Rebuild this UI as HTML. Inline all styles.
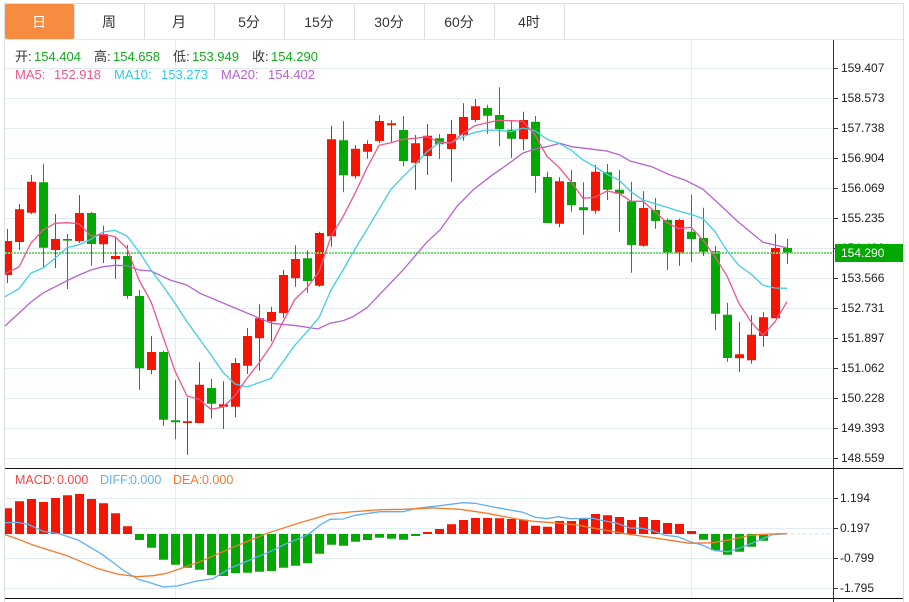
<!DOCTYPE html>
<html><head><meta charset="utf-8"><style>
html,body{margin:0;padding:0;background:#fff;width:909px;height:602px;overflow:hidden}
svg{display:block}
text{font-family:"Liberation Sans","Noto Sans CJK SC",sans-serif}
</style></head><body>
<svg width="909" height="602" viewBox="0 0 909 602" xmlns="http://www.w3.org/2000/svg">
<defs><clipPath id="c"><rect x="5" y="40" width="828" height="562"/></clipPath></defs>
<rect width="909" height="602" fill="#fff"/>
<!-- frame -->
<path d="M4 3.5H904M4.5 3V602M903.5 3V602" stroke="#dcdfe2" fill="none"/>
<path d="M5 39.5H903" stroke="#e2e8ec"/>
<!-- tabs -->
<rect x="5" y="4" width="69" height="35" rx="2" fill="#f58c40"/>
<path d="M74.5 4V39M144.5 4V39M214.5 4V39M284.5 4V39M354.5 4V39M424.5 4V39M494.5 4V39M564.5 4V39" stroke="#dcdfe2"/>
<g font-size="14" text-anchor="middle" fill="#333">
<text x="39" y="27" fill="#fff">日</text><text x="109" y="27">周</text><text x="179" y="27">月</text><text x="249" y="27">5分</text><text x="319" y="27">15分</text><text x="389" y="27">30分</text><text x="459" y="27">60分</text><text x="529" y="27">4时</text>
</g>
<!-- grid -->
<path d="M5 68.5H833M5 98.5H833M5 128.5H833M5 158.5H833M5 188.5H833M5 218.5H833M5 248.5H833M5 278.5H833M5 308.5H833M5 338.5H833M5 368.5H833M5 398.5H833M5 428.5H833M5 458.5H833M5 498.5H833M5 528.5H833M5 558.5H833M5 588.5H833M175.5 40V598M691.5 40V598" stroke="#e3ecf3" fill="none"/>
<g clip-path="url(#c)">
<!-- wicks -->
<path fill="none" stroke="#ee1c10" d="M7.5 229V283M19.5 204V250M31.5 175V214M55.5 214V268M79.5 195V243M103.5 225.7V263M115.5 237V278.7M151.5 336V374.3M187.5 397.7V454.7M199.5 362.3V423.3M223.5 381.3V429M235.5 358V417.3M247.5 328V374M259.5 304.3V370.7M271.5 306.7V341.3M283.5 270V318M295.5 245.3V286.7M319.5 231.7V286.7M331.5 125.7V246.7M355.5 145V178.7M367.5 140.3V158.7M379.5 115.3V143.3M391.5 120.3V142.3M415.5 135V189.7M427.5 124V175M451.5 120V181.7M463.5 103.3V140.7M475.5 99V122.3M523.5 111.7V150.3M559.5 177.3V227.3M595.5 165V214M643.5 191.3V246.7M679.5 218.7V265.7M739.5 322V372M751.5 315.3V363.7M763.5 312.3V346.7M775.5 234V318"/>
<path fill="none" stroke="#129a12" d="M43.5 163.7V268M67.5 234V289M91.5 212V265.7M127.5 245V298.7M139.5 290V389.7M163.5 350.7V425.7M175.5 379.7V439.3M211.5 378.7V418.7M307.5 250.3V292.7M343.5 121.3V192.3M403.5 116V166.3M439.5 134V159M487.5 104.7V133.7M499.5 87.3V146.3M511.5 120.3V157.7M535.5 116V192.7M547.5 171.7V223M571.5 169.7V211.7M583.5 182.3V234.7M607.5 164V200M619.5 170V232M631.5 181.7V272.7M655.5 198V228.7M667.5 218.3V270M691.5 194.7V262M703.5 207.7V256M715.5 245.7V330.3M727.5 302.7V361.7M787.5 238.7V264"/>
<!-- bodies -->
<path fill="#f41503" d="M3 241h9V275h-9zM15 209.3h9V242h-9zM27 181.7h9V212.7h-9zM51 239h9V250h-9zM75 213h9V241h-9zM99 234h9V244.3h-9zM111 256h9V259h-9zM147 352h9V370h-9zM183 421.3h9V423h-9zM195 384.7h9V423h-9zM219 404.3h9V406.7h-9zM231 363h9V406.7h-9zM243 336h9V365.7h-9zM255 318.3h9V338.3h-9zM267 312h9V321.3h-9zM279 275h9V313h-9zM291 259h9V278.3h-9zM315 233h9V285.7h-9zM327 139.3h9V236.3h-9zM351 148.7h9V176.3h-9zM363 144h9V151.7h-9zM375 121h9V141h-9zM387 123.3h9V125.3h-9zM411 143.3h9V162.7h-9zM423 135.7h9V156h-9zM447 134h9V149h-9zM459 117h9V134.7h-9zM471 106.3h9V120h-9zM519 120h9V139h-9zM555 181.3h9V223.7h-9zM591 171.7h9V210.7h-9zM639 208h9V245.7h-9zM675 220h9V253h-9zM735 354.3h9V358.3h-9zM747 334.7h9V360.3h-9zM759 317.3h9V336h-9zM771 248h9V318.3h-9z"/>
<path fill="#03a803" d="M39 182.3h9V247.7h-9zM63 239h9V240.6h-9zM87 213h9V244h-9zM123 256h9V296h-9zM135 296h9V368.3h-9zM159 352h9V419.7h-9zM171 420.3h9V422.3h-9zM207 388h9V403.7h-9zM303 258.3h9V281h-9zM339 140.3h9V175.3h-9zM399 130h9V161h-9zM435 138.3h9V144.3h-9zM483 108h9V115.7h-9zM495 115h9V129h-9zM507 129.7h9V138.7h-9zM531 121.7h9V176h-9zM543 177h9V223h-9zM567 182h9V205.3h-9zM579 207.3h9V210.3h-9zM603 172.3h9V189.7h-9zM615 189.7h9V193.7h-9zM627 201.3h9V245h-9zM651 210h9V221h-9zM663 220h9V253h-9zM687 231.7h9V239h-9zM699 238h9V251.7h-9zM711 251.3h9V313.7h-9zM723 314.7h9V358h-9zM783 248h9V253h-9z"/>
<!-- last price dotted -->
<path d="M5 253H835" stroke="#7ad87a" stroke-width="2" stroke-dasharray="2 1" fill="none"/>
<!-- MA lines -->
<polyline fill="none" stroke="#b662cf" stroke-width="1.3" points="5,326 31,302 43,293 67,280.7 79,275 91,270 103,266.7 115,265.3 127,265.7 139,270 151,271 163,276.7 170,280 186.7,285 200,293.3 235,308 271.7,323.3 296.7,325.7 318,329 330,323.3 343,320.7 353,316.7 367,307.7 403,270 426.7,242.3 440,230 456.7,206.7 473,190 490,176.7 506.7,165 523,153 535,149 546.7,146.7 560,143.3 571.7,146.7 593,149.3 606.7,151 620,155 630,161 651.7,166.7 670,175 685,180 703,189.3 718,203 738,221.7 763,242.3 786.7,247.7"/>
<polyline fill="none" stroke="#3fcfe4" stroke-width="1.3" points="5,296.7 19,288.7 31,273 43,268 55,258.3 67,247.7 79,244.7 91,239.3 103,232 115,230.3 127,236 139,251.7 151,270 163,286 175,303.3 187,321.7 199,338.3 211,355 223,372.3 235,384 247,387 259,382.7 271,378.3 283,361.7 295,345 307,331.7 319,317.7 331,290 343,270 355,249 367,229.3 379,209.3 391,189.3 403,176.7 415,165 427,151.7 439,142.7 451,142.7 463,136.7 475,132.3 487,130 499,130.3 511,131.7 523,128 535,130.7 547,139.3 559,143.3 571,150 583,160 595,166.7 607,174.3 619,180 631,191.7 643,200 655,203.7 667,207.3 679,211.3 691,214.3 703,218.7 715,231.7 727,250.7 739,265.7 751,274 763,285.3 775,288 787,288.3"/>
<polyline fill="none" stroke="#f0558a" stroke-width="1.3" points="5,275 7,272.7 19,267 31,243 43,230 55,223.3 67,222.7 79,223.7 91,236 103,234.3 115,236.7 127,248.3 139,280 151,301.7 163,336.7 175,371 187,396 199,399.3 211,409.3 223,407 235,395.7 247,378.3 259,363 271,345.7 283,321.7 295,299.3 307,287.7 319,271.7 331,236.7 343,216.7 355,193.3 367,168 379,145.3 391,142.7 403,139.3 415,138.3 427,136.7 439,142 451,142.7 463,133.3 475,125.7 487,122.7 499,120.3 511,120.7 523,121.3 535,135 547,156.3 559,167.3 571,181.7 583,198.3 595,197.3 607,191 619,193.3 631,201.3 643,201.3 655,211.7 667,222.7 679,228.7 691,227.3 703,240 715,256.7 727,276 739,303.3 751,321.7 763,335.3 775,321.7 787,301.7"/>
<!-- MACD zero -->
<path d="M5 534H830" stroke="#bfe3f2" stroke-dasharray="3 3" fill="none"/>
<!-- MACD bars -->
<path fill="#f41503" d="M3 508.3h9V534h-9zM15 501.3h9V534h-9zM27 499h9V534h-9zM39 502h9V534h-9zM51 498h9V534h-9zM63 495.3h9V534h-9zM75 494h9V534h-9zM87 499h9V534h-9zM99 503.3h9V534h-9zM111 513.3h9V534h-9zM123 526.3h9V534h-9zM423 532h9V534h-9zM435 529h9V534h-9zM447 524.3h9V534h-9zM459 520h9V534h-9zM471 518h9V534h-9zM483 518h9V534h-9zM495 518.3h9V534h-9zM507 519h9V534h-9zM519 519.7h9V534h-9zM531 525.7h9V534h-9zM543 526.7h9V534h-9zM555 521h9V534h-9zM567 521h9V534h-9zM579 519h9V534h-9zM591 514h9V534h-9zM603 515.3h9V534h-9zM615 517h9V534h-9zM627 520h9V534h-9zM639 517h9V534h-9zM651 520h9V534h-9zM663 523h9V534h-9zM675 524h9V534h-9zM687 531h9V534h-9z"/>
<path fill="#03a803" d="M135 534h9V540h-9zM147 534h9V547.7h-9zM159 534h9V559.7h-9zM171 534h9V564.7h-9zM183 534h9V567.7h-9zM195 534h9V569.7h-9zM207 534h9V575h-9zM219 534h9V576h-9zM231 534h9V573.3h-9zM243 534h9V572.7h-9zM255 534h9V571.7h-9zM267 534h9V571h-9zM279 534h9V567.7h-9zM291 534h9V565.7h-9zM303 534h9V563.3h-9zM315 534h9V553.7h-9zM327 534h9V544.7h-9zM339 534h9V545.7h-9zM351 534h9V541.7h-9zM363 534h9V540h-9zM375 534h9V537.7h-9zM387 534h9V538.7h-9zM399 534h9V539.7h-9zM411 534h9V536h-9zM699 534h9V539.7h-9zM711 534h9V550.3h-9zM723 534h9V554.7h-9zM735 534h9V551.7h-9zM747 534h9V546.7h-9zM759 534h9V540.7h-9z"/>
<!-- DIFF / DEA -->
<polyline fill="none" stroke="#5fb0f2" stroke-width="1.3" points="5,522.7 17,522.3 28,524.3 43,531.3 60,534 78,540 102,554.3 123,570 138,579.3 148,582 163,587 177,586 197,581 213,578.7 230,568.3 250,560 270,551.7 287,543.3 300,538.3 310,533.3 320,525 330,519.3 343,519 355,515.3 380,511.7 403,511.7 417,508.3 440,505.7 463,502.7 475,503.3 497,507.7 523,512.3 535,517.3 547,518.7 558,516.7 570,518.7 593,518.3 600,520 617,523.3 630,528 642,528.3 653,530.7 665,535.3 678,536.7 690,541.7 702,545 715,550.7 728,551.7 743,546.7 760,540 772,534.7 787,533.7"/>
<polyline fill="none" stroke="#f57a2c" stroke-width="1.3" points="5,534.7 17,538.7 33,545 67,555.7 97,568.3 117,574 137,576.7 153,575.7 167,573.3 200,561.7 233,547.3 267,533.3 300,522.7 330,514 350,512 380,509.7 403,509.3 433,508 460,509.3 487,513.3 517,519 533,521.3 553,522.7 577,525 600,529.3 627,534 657,538.3 690,543.3 713,542.7 733,539.3 750,535.3 770,534 787,533.7"/>
</g>
<!-- separators & axis -->
<path d="M5 468.5H903M5 598.5H903" stroke="#111" fill="none"/>
<path d="M833.5 40V602" stroke="#333" fill="none"/>
<path d="M833 68.5h5M833 98.5h5M833 128.5h5M833 158.5h5M833 188.5h5M833 218.5h5M833 248.5h5M833 278.5h5M833 308.5h5M833 338.5h5M833 368.5h5M833 398.5h5M833 428.5h5M833 458.5h5M833 498.5h5M833 528.5h5M833 558.5h5M833 588.5h5" stroke="#333" fill="none"/>
<g font-size="12" fill="#222">
<text x="841" y="72">159.407</text><text x="841" y="102">158.573</text><text x="841" y="132">157.738</text><text x="841" y="162">156.904</text><text x="841" y="192">156.069</text><text x="841" y="222">155.235</text><text x="841" y="252">154.400</text><text x="841" y="282">153.566</text><text x="841" y="312">152.731</text><text x="841" y="342">151.897</text><text x="841" y="372">151.062</text><text x="841" y="402">150.228</text><text x="841" y="432">149.393</text><text x="841" y="462">148.559</text>
<text x="840" y="502">1.194</text><text x="840" y="532">0.197</text><text x="840" y="562">-0.799</text><text x="840" y="592">-1.795</text>
</g>
<rect x="835" y="244" width="68" height="18" fill="#03a803"/>
<text x="841" y="257" font-size="12" fill="#fff">154.290</text>
<!-- legends -->
<g font-size="13">
<text x="15" y="61" fill="#333">开:</text><text x="34" y="61" fill="#12ab1c">154.404</text>
<text x="94" y="61" fill="#333">高:</text><text x="113" y="61" fill="#12ab1c">154.658</text>
<text x="173" y="61" fill="#333">低:</text><text x="192" y="61" fill="#12ab1c">153.949</text>
<text x="252" y="61" fill="#333">收:</text><text x="271" y="61" fill="#12ab1c">154.290</text>
<text x="15" y="79" fill="#f0558a">MA5:</text><text x="54" y="79" fill="#f0558a">152.918</text>
<text x="114" y="79" fill="#33cbe4">MA10:</text><text x="161" y="79" fill="#33cbe4">153.273</text>
<text x="221" y="79" fill="#b662cf">MA20:</text><text x="268" y="79" fill="#b662cf">154.402</text>
</g>
<g font-size="12.5">
<text x="15" y="484" fill="#f04848">MACD:</text><text x="57" y="484" fill="#f04848">0.000</text>
<text x="100" y="484" fill="#5fb0f2">DIFF:</text><text x="130" y="484" fill="#5fb0f2">0.000</text>
<text x="173" y="484" fill="#f57a2c">DEA:</text><text x="202" y="484" fill="#f57a2c">0.000</text>
</g>
</svg>
</body></html>
